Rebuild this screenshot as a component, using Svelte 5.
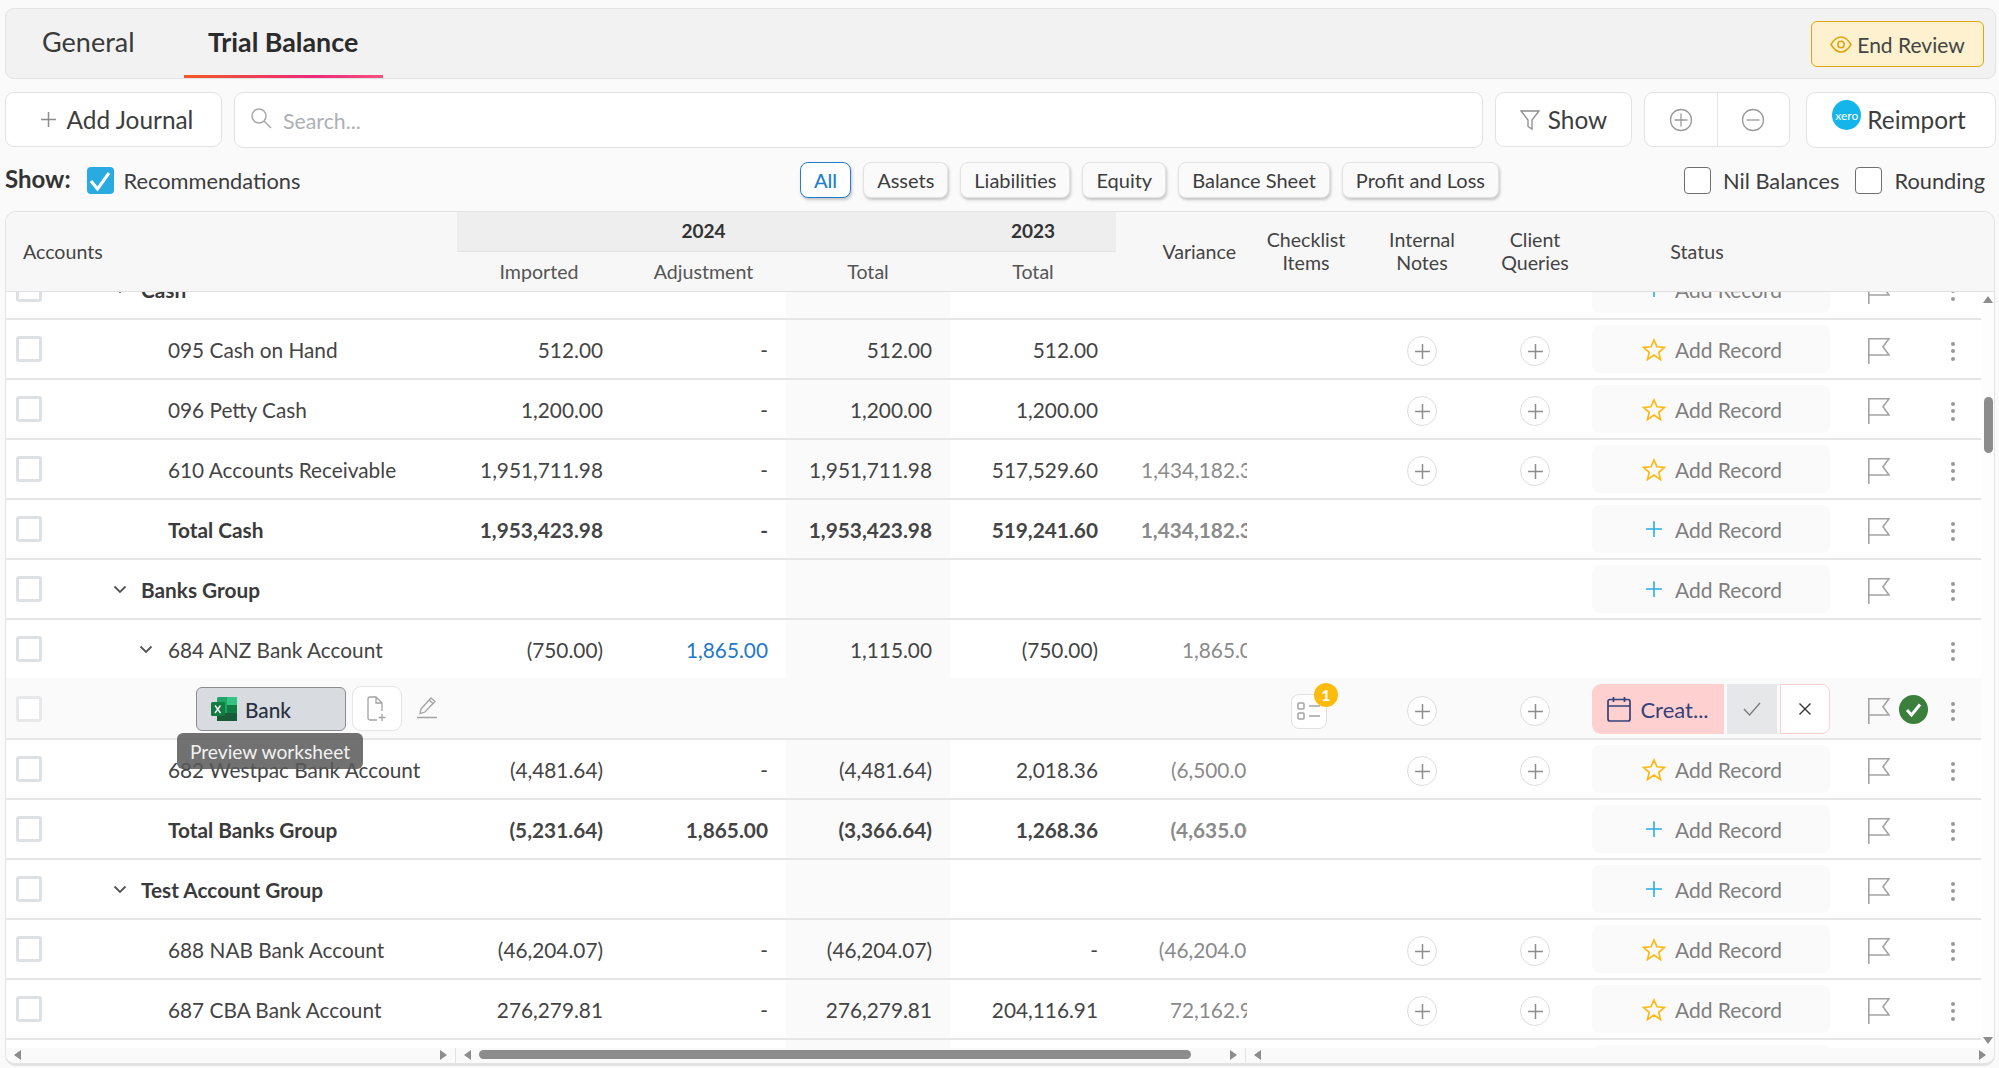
<script>
  const tabs = ['General', 'Trial Balance'];
  const chips = ['All', 'Assets', 'Liabilities', 'Equity', 'Balance Sheet', 'Profit and Loss'];
  const rows = [
    { kind: 'group', label: 'Cash', rec: 'plus' },
    { kind: 'leaf', label: '095 Cash on Hand', v: ['512.00', '-', '512.00', '512.00'], rec: 'star', add: true },
    { kind: 'leaf', label: '096 Petty Cash', v: ['1,200.00', '-', '1,200.00', '1,200.00'], rec: 'star', add: true },
    { kind: 'leaf', label: '610 Accounts Receivable', v: ['1,951,711.98', '-', '1,951,711.98', '517,529.60'], vr: '1,434,182.38', rec: 'star', add: true },
    { kind: 'total', label: 'Total Cash', v: ['1,953,423.98', '-', '1,953,423.98', '519,241.60'], vr: '1,434,182.38', rec: 'plus' },
    { kind: 'group', label: 'Banks Group', rec: 'plus' },
    { kind: 'parent', label: '684 ANZ Bank Account', v: ['(750.00)', '1,865.00', '1,115.00', '(750.00)'], vr: '1,865.00', link: true },
    { kind: 'sheet' },
    { kind: 'leaf', label: '682 Westpac Bank Account', v: ['(4,481.64)', '-', '(4,481.64)', '2,018.36'], vr: '(6,500.00)', rec: 'star', add: true },
    { kind: 'total', label: 'Total Banks Group', v: ['(5,231.64)', '1,865.00', '(3,366.64)', '1,268.36'], vr: '(4,635.00)', rec: 'plus' },
    { kind: 'group', label: 'Test Account Group', rec: 'plus' },
    { kind: 'leaf', label: '688 NAB Bank Account', v: ['(46,204.07)', '-', '(46,204.07)', '-'], vr: '(46,204.07)', rec: 'star', add: true },
    { kind: 'leaf', label: '687 CBA Bank Account', v: ['276,279.81', '-', '276,279.81', '204,116.91'], vr: '72,162.90', rec: 'star', add: true },
    { kind: 'leaf', label: '', rec: 'star', add: true }
  ];
  const empty = ['', '', '', ''];
</script>

{#snippet plusIcon(size, color)}
  <svg width={size} height={size} viewBox="0 0 16 16" fill="none" stroke={color} stroke-width="1.4"><path d="M8 1v14M1 8h14" /></svg>
{/snippet}

{#snippet circleBtn()}
  <span class="circle">{@render plusIcon(17, '#8c8c8c')}</span>
{/snippet}

{#snippet flag()}
  <svg class="flag" width="22" height="26" viewBox="0 0 22 26" fill="none" stroke="#a3a3a3" stroke-width="1.6"><path d="M.8 26V.8h20.200L15 8.800l6 8.200H.8" /></svg>
{/snippet}

{#snippet dots()}
  <span class="dots"><i></i><i></i><i></i></span>
{/snippet}

{#snippet record(type)}
  <span class="record">
    {#if type === 'star'}
      <svg width="24" height="23" viewBox="0 0 24 23" fill="none" stroke="#fdb913" stroke-width="1.700"><path d="M12 2l3 6.800 7.400.7-5.600 4.900 1.700 7.200L12 17l-6.500 4.600 1.700-7.200L1.600 9.500 9 8.800z" /></svg>
    {:else}
      <span class="recplus">{@render plusIcon(18, '#29abe2')}</span>
    {/if}
    <span>Add Record</span>
  </span>
{/snippet}

<div class="page">
  <header class="tabbar">
    <nav class="tabs">
      {#each tabs as t, i}
        <span class="tab" class:active={i === 1}>{t}</span>
      {/each}
    </nav>
    <button class="end">
      <svg width="22" height="17" viewBox="0 0 22 17" fill="none" stroke="#dfa40c" stroke-width="1.500"><path d="M1 8.500c3-5 6.300-7.500 10-7.500s7 2.500 10 7.500c-3 5-6.300 7.500-10 7.500S4 13.500 1 8.500z" /><circle cx="11" cy="8.500" r="3.200" /></svg>
      End Review
    </button>
  </header>

  <div class="toolbar">
    <button class="tool add">{@render plusIcon(17, '#8c8c8c')}<span>Add Journal</span></button>
    <label class="search">
      <svg width="22" height="22" viewBox="0 0 22 22" fill="none" stroke="#a8a8a8" stroke-width="1.500"><circle cx="9" cy="9" r="7" /><path d="M14 14l7 7" /></svg>
      <span>Search...</span>
    </label>
    <button class="tool show">
      <svg width="20" height="22" viewBox="0 0 20 22" fill="none" stroke="#8c8c8c" stroke-width="1.300"><path d="M1 2h18l-7 9v9l-4-2.500V11z" /></svg>
      <span>Show</span>
    </button>
    <div class="tool pair">
      <span><svg width="24" height="24" viewBox="0 0 24 24" fill="none" stroke="#9a9a9a" stroke-width="1.300"><circle cx="12" cy="12" r="10.500" /><path d="M12 5.500v13M5.500 12h13" /></svg></span>
      <span><svg width="24" height="24" viewBox="0 0 24 24" fill="none" stroke="#9a9a9a" stroke-width="1.300"><circle cx="12" cy="12" r="10.500" /><path d="M5.500 12h13" /></svg></span>
    </div>
    <button class="tool reimport"><span class="xero">xero</span><span>Reimport</span></button>
  </div>

  <div class="filters">
    <div class="recs">
      <strong class="showlabel">Show:</strong>
      <span class="check on"><svg width="27" height="27" viewBox="0 0 27 27" fill="none" stroke="#fff" stroke-width="3"><path d="M4 14l6.500 8L22 6" /></svg></span>
      <span class="flabel">Recommendations</span>
    </div>
    <div class="chips">
      {#each chips as c, i}
        <span class="chip" class:sel={i === 0}>{c}</span>
      {/each}
    </div>
    <div class="toggles">
      <span class="check"></span><span class="flabel wide">Nil Balances</span>
      <span class="check second"></span><span class="flabel wide">Rounding</span>
    </div>
  </div>

  <section class="table">
    <div class="thead">
      <div class="th accounts">Accounts</div>
      <div class="years">
        <div class="yearband"><b class="y24">2024</b><b class="y23">2023</b></div>
        <div class="subs"><span>Imported</span><span>Adjustment</span><span>Total</span><span>Total</span></div>
      </div>
      <div class="th variance">Variance</div>
      <div class="th c1">Checklist<br />Items</div>
      <div class="th c2">Internal<br />Notes</div>
      <div class="th c3">Client<br />Queries</div>
      <div class="th status">Status</div>
    </div>

    <div class="bodywrap">
      <div class="viewport">
        <div class="scrolled">
          {#each rows as r}
            <div class="row {r.kind}">
              <div class="cell acct">
                <span class="rowcheck"></span>
                {#if r.kind === 'sheet'}
                  <span class="sheetbtn">
                    <svg width="28" height="26" viewBox="0 0 28 26">
                      <rect x="7" y="1" width="20" height="24" rx="1.500" fill="#21a366" />
                      <rect x="17" y="1" width="10" height="8" fill="#33c481" />
                      <rect x="7" y="9" width="10" height="8" fill="#21a366" />
                      <rect x="17" y="9" width="10" height="8" fill="#107c41" />
                      <rect x="7" y="17" width="20" height="8" fill="#185c37" />
                      <rect x="1" y="6" width="14" height="14" rx="1.500" fill="#107c41" />
                      <path d="M5 9.500l5.500 7.500M10.500 9.500L5 17" stroke="#fff" stroke-width="1.300" />
                    </svg>
                    Bank
                    <span class="tooltip">Preview worksheet</span>
                  </span>
                  <span class="docbtn">
                    <svg width="20" height="26" viewBox="0 0 20 26" fill="none" stroke="#a3a3a3" stroke-width="1.300"><path d="M10 24H3a2 2 0 0 1-2-2V3a2 2 0 0 1 2-2h6l6 6v8M9 1v6h6M15 18v7M11.500 21.500h7" /></svg>
                  </span>
                  <svg class="pencil" width="22" height="24" viewBox="0 0 22 24" fill="none" stroke="#a3a3a3" stroke-width="1.300"><path d="M5 14L15 3l4 3.500L9 17l-5 1.500zM13 5l4 3.500M1 22.500h20" /></svg>
                {:else}
                  {#if r.kind === 'group' || r.kind === 'parent'}
                    <svg class="chev" class:deep={r.kind === 'parent'} width="14" height="9" viewBox="0 0 14 9" fill="none" stroke="#555" stroke-width="1.800"><path d="M1.500 1.500L7 7l5.500-5.500" /></svg>
                  {/if}
                  <span class="label">{r.label}</span>
                {/if}
              </div>
              {#each r.v ?? empty as val, i}
                <div class="cell num" class:shade={i === 2} class:blue={r.link && i === 1}>{val}</div>
              {/each}
              <div class="cell var">{#if r.vr}<span>{r.vr}</span>{/if}</div>
              <div class="cell mid">
                {#if r.kind === 'sheet'}
                  <span class="listbtn">
                    <svg width="24" height="20" viewBox="0 0 24 20" fill="none" stroke="#a3a3a3" stroke-width="1.500"><rect x="1" y="2" width="6" height="6" rx="1" /><rect x="1" y="12" width="6" height="6" rx="1" /><path d="M12 5h11M12 15h11" /></svg>
                    <span class="badge">1</span>
                  </span>
                {/if}
              </div>
              <div class="cell mid">{#if r.add || r.kind === 'sheet'}{@render circleBtn()}{/if}</div>
              <div class="cell mid">{#if r.add || r.kind === 'sheet'}{@render circleBtn()}{/if}</div>
              <div class="cell stat">
                {#if r.kind === 'sheet'}
                  <span class="create">
                    <svg width="24" height="26" viewBox="0 0 24 26" fill="none" stroke="#33427a" stroke-width="1.700"><rect x="1" y="3.500" width="22" height="21.500" rx="2" /><path d="M1 10h22M6.500 1v5M17.500 1v5" /></svg>
                    <span>Creat...</span>
                  </span>
                  <span class="approve"><svg width="18" height="14" viewBox="0 0 18 14" fill="none" stroke="#7a7a7a" stroke-width="1.300"><path d="M1 7l5.500 6L17 1" /></svg></span>
                  <span class="reject"><svg width="14" height="14" viewBox="0 0 14 14" fill="none" stroke="#333" stroke-width="1.400"><path d="M1.500 1.500l11 11M12.500 1.500l-11 11" /></svg></span>
                {:else if r.rec}
                  {@render record(r.rec)}
                {/if}
              </div>
              <div class="cell iconcell">{#if r.kind !== 'parent'}{@render flag()}{/if}</div>
              <div class="cell iconcell">
                {#if r.kind === 'sheet'}
                  <svg class="ok" width="29" height="29" viewBox="0 0 29 29"><circle cx="14.500" cy="14.500" r="14.500" fill="#3a7f3c" /><path d="M8 15l4.500 5L21 9.500" fill="none" stroke="#fff" stroke-width="3" /></svg>
                {/if}
              </div>
              <div class="cell iconcell">{@render dots()}</div>
            </div>
          {/each}
        </div>
      </div>
      <div class="vbar">
        <i class="arrow up"></i>
        <i class="vthumb"></i>
        <i class="arrow down"></i>
      </div>
    </div>

    <div class="hbar">
      <div class="pane p1"><i class="arrow left"></i><i class="arrow right"></i></div>
      <div class="pane p2"><i class="arrow left"></i><i class="hthumb"></i><i class="arrow right"></i></div>
      <div class="pane p3"><i class="arrow left"></i><i class="arrow right"></i></div>
    </div>
  </section>
</div>

<style>
  :global(body) {
    margin: 0;
    background: #fafafa;
    font-family: Lato, "Open Sans", sans-serif;
    color: #333;
    overflow: hidden;
  }
  .page {
    width: 1999px;
    height: 1068px;
    box-sizing: border-box;
    padding: 8px 3px 2px 5px;
    display: flex;
    flex-direction: column;
    overflow: hidden;
  }
  button { font: inherit; color: inherit; cursor: pointer; }

  .tabbar {
    height: 71px;
    box-sizing: border-box;
    flex: none;
    display: flex;
    align-items: stretch;
    justify-content: space-between;
    background: #f2f2f2;
    border: 1px solid #e3e3e3;
    border-radius: 9px;
    padding: 0 11px 0 0;
  }
  .tabs { display: flex; padding-left: 12px; }
  .tab {
    font-size: 27px;
    padding: 0 24px 4px;
    height: 69px;
    box-sizing: border-box;
    display: flex;
    align-items: center;
    position: relative;
    margin-right: 25px;
    color: #3a3a3a;
  }
  .tab.active { font-size: 26.800px; font-weight: 700; color: #2b2b2b; width: 199px; justify-content: center; padding: 0 0 4px; margin-right: 0; }
  .tab.active::after {
    content: "";
    position: absolute;
    left: 0;
    right: 0;
    bottom: 0;
    height: 3px;
    background: linear-gradient(90deg, #f15a24, #ec2a7a 65%, #f6517f);
  }
  .end {
    align-self: center;
    margin-top: 1px;
    width: 173px;
    height: 46px;
    background: #fdf1cf;
    border: 1px solid #e0a60f;
    border-radius: 6px;
    font-size: 21px;
    color: #444;
    display: flex;
    align-items: center;
    justify-content: center;
    gap: 5px;
    padding: 0;
  }

  .toolbar {
    flex: none;
    display: flex;
    gap: 12px;
    margin-top: 13px;
    height: 56px;
    align-items: stretch;
  }
  .tool {
    background: #fff;
    border: 1px solid #e3e3e3;
    border-radius: 9px;
    height: 55px;
    padding: 0;
    display: flex;
    align-items: center;
    justify-content: center;
    font-size: 24.400px;
    color: #3d3d3d;
    box-sizing: border-box;
  }
  .add { width: 217px; gap: 10px; padding-left: 6px; }
  .search {
    flex: 1;
    background: #fff;
    border: 1px solid #e3e3e3;
    border-radius: 9px;
    display: flex;
    align-items: center;
    gap: 11px;
    padding: 2px 0 0 15px;
    font-size: 21.300px;
    color: #adb0b5;
  }
  .search svg { margin-top: -6px; }
  .show { width: 137px; gap: 8px; }
  .pair { width: 146px; }
  .pair span { flex: 1; height: 100%; display: flex; align-items: center; justify-content: center; }
  .pair span + span { border-left: 1px solid #e3e3e3; }
  .reimport { width: 190px; margin-left: 4px; gap: 6px; height: 56px; padding: 0 4px 2px 0; }
  .xero {
    width: 29px;
    height: 30px;
    margin-top: -8px;
    border-radius: 50%;
    background: #13b5ea;
    color: #fff;
    font-size: 12px;
    display: flex;
    align-items: center;
    justify-content: center;
  }

  .filters {
    flex: none;
    height: 63px;
    box-sizing: border-box;
    padding: 2px 11px 0 0;
    display: flex;
    align-items: center;
  }
  .recs { width: 795px; display: flex; align-items: center; flex: none; }
  .showlabel { font-size: 24px; color: #333; margin-top: -4px; }
  .check {
    width: 27px;
    height: 27px;
    box-sizing: border-box;
    border: 1px solid #6f6f6f;
    border-radius: 4px;
    background: #fff;
    display: inline-block;
    flex: none;
  }
  .check.on { background: #29abe2; border: 0; margin-left: 16px; }
  .check.on svg { display: block; }
  .flabel { font-size: 21.800px; color: #3d3d3d; margin-left: 10px; }
  .flabel.wide { margin-left: 12px; }
  .chips { display: flex; gap: 12px; margin-top: -2px; }
  .chip {
    height: 36px;
    box-sizing: border-box;
    padding: 0 13px;
    display: flex;
    align-items: center;
    font-size: 20px;
    background: #fafafa;
    border: 1px solid #e3e3e3;
    border-radius: 8px;
    box-shadow: 1px 2px 3px rgba(0, 0, 0, .22);
    color: #3d3d3d;
  }
  .chip.sel { border-color: #1f7fd0; color: #1f7fd0; background: #fff; font-weight: 500; }
  .toggles { display: flex; align-items: center; margin-left: auto; }
  .check.second { margin-left: 16px; }

  .table {
    flex: 1;
    min-height: 0;
    display: flex;
    flex-direction: column;
    border: 1px solid #e3e3e3;
    border-bottom: 3px solid #e3e3e3;
    border-radius: 11px;
    background: #fff;
    overflow: hidden;
    margin-right: 1px;
  }
  .thead {
    flex: none;
    height: 80px;
    box-sizing: border-box;
    display: flex;
    align-items: stretch;
    background: #f7f7f7;
    border-bottom: 1px solid #e0e0e0;
    font-size: 19.600px;
    color: #444;
  }
  .th { display: flex; align-items: center; line-height: 23px; text-align: center; justify-content: center; }
  .c1, .c2, .c3 { padding-bottom: 2px; box-sizing: border-box; }
  .accounts { width: 451px; justify-content: flex-start; padding-left: 17px; box-sizing: border-box; }
  .years { width: 659px; display: flex; flex-direction: column; }
  .yearband {
    height: 40px;
    box-sizing: border-box;
    padding-bottom: 3px;
    flex: none;
    background: #eee;
    border-bottom: 1px solid #e3e3e3;
    display: flex;
    align-items: center;
    font-size: 19px;
    color: #333;
  }
  .yearband b { text-align: center; font-weight: 700; }
  .y24 { width: 493px; }
  .y23 { width: 166px; }
  .subs { flex: 1; display: grid; grid-template-columns: 164px 165px 164px 166px; }
  .subs span { display: flex; align-items: center; justify-content: center; color: #555; }
  .variance { width: 131px; justify-content: flex-end; padding-right: 11px; box-sizing: border-box; }
  .c1 { width: 118px; }
  .c2 { width: 114px; }
  .c3 { width: 112px; }
  .status { width: 212px; }

  .bodywrap { flex: 1; min-height: 0; display: flex; }
  .viewport { width: 1975px; flex: none; overflow: hidden; }
  .scrolled { margin-top: -32px; }
  .row {
    display: grid;
    grid-template-columns: 451px 164px 165px 164px 166px 131px 118px 114px 112px 241px 66px 34px 49px;
    height: 60px;
    box-sizing: border-box;
    border-bottom: 2px solid #e6e6e6;
    font-size: 20.800px;
    color: #444;
  }
  .row.parent { border-bottom-color: #fafafa; }
  .cell { display: flex; align-items: center; min-width: 0; height: 58px; box-sizing: border-box; padding-top: 2px; }
  .acct { position: relative; padding-left: 10px; padding-top: 0; }
  .rowcheck {
    width: 26px;
    height: 26px;
    box-sizing: border-box;
    border: 3px solid #dde1e6;
    border-radius: 3px;
    background: #fff;
    flex: none;
  }
  .label { margin-left: 126px; white-space: nowrap; }
  .group .label { margin-left: 99px; }
  .chev { position: absolute; left: 107px; }
  .chev.deep { left: 133px; }
  .group, .total { font-weight: 700; }
  .group .label, .total .label { color: #3a3a3a; }
  .num { justify-content: flex-end; padding-right: 18px; padding-top: 0; white-space: nowrap; }
  .num.shade { background: #fafafa; }
  .num.blue { color: #1f78c8; }
  .var { overflow: hidden; justify-content: flex-end; color: #8a8a8a; white-space: nowrap; padding-top: 0; }
  .var span { flex: none; margin-right: -17px; }
  .mid { justify-content: center; }
  .circle {
    width: 30px;
    height: 30px;
    box-sizing: border-box;
    border: 1px solid #dcdcdc;
    border-radius: 50%;
    display: flex;
    align-items: center;
    justify-content: center;
    background: #fff;
    margin-top: 2px;
  }
  .stat { padding-left: 1px; gap: 3px; font-weight: 400; }
  .record {
    width: 238px;
    height: 48px;
    margin-top: -2px;
    border-radius: 8px;
    background: #fafafa;
    display: flex;
    align-items: center;
    justify-content: center;
    gap: 9px;
    padding-left: 2px;
    box-sizing: border-box;
    font-size: 21px;
    color: #7f7f7f;
  }
  .recplus { width: 24px; display: flex; justify-content: center; }
  .iconcell { justify-content: center; }
  .flag { margin-left: 28px; margin-top: 2px; }
  .ok { margin-left: -4px; margin-top: -2px; }
  .dots { display: flex; flex-direction: column; gap: 3.500px; margin-left: -7px; margin-top: 2px; }
  .dots i { width: 4px; height: 4px; border-radius: 50%; background: #999; display: block; }

  .sheet { background: #fafafa; }
  .sheet .rowcheck { border-color: #e7e8ea; }
  .sheetbtn {
    position: absolute;
    left: 190px;
    top: 7px;
    width: 150px;
    height: 44px;
    box-sizing: border-box;
    display: flex;
    align-items: center;
    gap: 7px;
    padding-left: 13px;
    background: #d8dce1;
    border: 1px solid #8c8c8c;
    border-radius: 6px;
    font-weight: 500;
    color: #2a3040;
  }
  .tooltip {
    position: absolute;
    left: -20px;
    top: 45px;
    width: 186px;
    height: 36px;
    border-radius: 6px;
    background: rgba(88, 90, 88, .86);
    color: #f2f2f2;
    font-size: 19.200px;
    font-weight: 400;
    display: flex;
    align-items: center;
    justify-content: center;
    z-index: 2;
  }
  .docbtn {
    position: absolute;
    left: 346px;
    top: 6px;
    width: 50px;
    height: 45px;
    box-sizing: border-box;
    border: 1px solid #e5e5e5;
    border-radius: 9px;
    background: #fff;
    display: flex;
    align-items: center;
    justify-content: center;
  }
  .pencil { position: absolute; left: 410px; top: 15px; }
  .listbtn {
    position: relative;
    width: 36px;
    height: 35px;
    box-sizing: border-box;
    border: 1px solid #e0e0e0;
    border-radius: 8px;
    background: #fff;
    display: flex;
    align-items: center;
    justify-content: center;
    margin-top: 2px;
    margin-left: 6px;
  }
  .badge {
    position: absolute;
    right: -12px;
    top: -12px;
    width: 24px;
    height: 24px;
    border-radius: 50%;
    background: #fdbb0c;
    color: #fff;
    font-size: 16px;
    font-weight: 700;
    display: flex;
    align-items: center;
    justify-content: center;
  }
  .create {
    width: 132px;
    height: 50px;
    background: #ffd0d0;
    border-radius: 9px 0 0 9px;
    display: flex;
    align-items: center;
    justify-content: center;
    gap: 9px;
    color: #33427a;
    font-size: 22px;
    margin-top: -2px;
  }
  .approve {
    width: 50px;
    height: 50px;
    background: #e6e7e9;
    display: flex;
    align-items: center;
    justify-content: center;
    margin-top: -2px;
  }
  .reject {
    width: 50px;
    height: 50px;
    box-sizing: border-box;
    background: #fff;
    border: 1px solid #ffd0d0;
    border-radius: 0 8px 8px 0;
    display: flex;
    align-items: center;
    justify-content: center;
    margin-top: -2px;
  }

  .vbar { flex: 1; position: relative; background: #fdfdfd; }
  .vthumb {
    position: absolute;
    top: 105px;
    left: 3px;
    width: 9px;
    height: 56px;
    border-radius: 5px;
    background: #8c8c8c;
  }
  .arrow { position: absolute; width: 0; height: 0; border: 5px solid transparent; }
  .arrow.up { top: 4px; left: 2px; border-bottom: 7px solid #8c8c8c; border-top: 0; }
  .arrow.down { bottom: 4px; left: 2px; border-top: 7px solid #8c8c8c; border-bottom: 0; }

  .hbar { flex: none; height: 15px; display: flex; background: #fafafa; }
  .pane { position: relative; height: 100%; box-sizing: border-box; }
  .p1 { width: 449px; }
  .p2 { width: 791px; border-left: 1px solid #e3e3e3; border-right: 1px solid #e3e3e3; }
  .p3 { flex: 1; }
  .arrow.left { left: 8px; top: 2px; border-right: 7px solid #8c8c8c; border-left: 0; }
  .arrow.right { right: 8px; top: 2px; border-left: 7px solid #8c8c8c; border-right: 0; }
  .hthumb {
    position: absolute;
    left: 23px;
    right: 54px;
    top: 2px;
    height: 9px;
    border-radius: 5px;
    background: #8c8c8c;
  }
</style>
